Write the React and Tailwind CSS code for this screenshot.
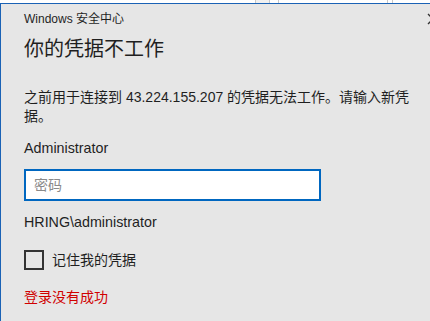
import React from "react";

const font = { fontFamily: '"Liberation Sans", "Noto Sans CJK SC", sans-serif' };

function BackgroundStrip() {
  // sliver of the window behind the dialog
  return (
    <div className="flex h-[3px] bg-white">
      <div className="w-[255px]" />
      <div className="w-[14px] bg-[#f0f0f0] border-l border-[#c8c8c8]" />
      <div className="w-[9px] border-l border-[#c8c8c8]" />
      <div className="w-[109px] border-l border-[#c8c8c8]" />
      <div className="w-[5px] border-l border-[#c8c8c8]" />
      <div className="flex-1 border-l border-[#c8c8c8]" />
    </div>
  );
}

export default function App() {
  return (
    <div
      className="w-[430px] h-[321px] overflow-hidden bg-white text-[#1f1f1f]"
      style={font}
    >
      <BackgroundStrip />
      <div className="relative h-[318px] bg-[#e6e6e6] border-l border-t border-[#1a62b5] pl-[23px] flex flex-col items-start">
        <button className="absolute right-[-9px] top-[9px] text-[#333]">
          <svg width="12" height="12" viewBox="0 0 12 12" className="block">
            <path d="M1 1 L11 11 M11 1 L1 11" stroke="currentColor" strokeWidth="1.3" />
          </svg>
        </button>

        <div className="mt-[7px] h-[16px] text-[12px] leading-[16px]">Windows 安全中心</div>

        <h1 className="mt-[8px] h-[28px] text-[20px] leading-[28px] font-normal">你的凭据不工作</h1>

        <p className="mt-[25px] h-[38px] w-[392px] text-[14px] leading-[19px]">
          之前用于连接到 43.224.155.207 的凭据无法工作。请输入新凭据。
        </p>

        <div className="mt-[13px] h-[19px] text-[14.3px] leading-[19px]">Administrator</div>

        <input
          type="password"
          placeholder="密码"
          className="mt-[11px] block w-[297px] h-[32px] bg-white border-2 border-[#0067c0] px-[8px] text-[14px] placeholder:text-[#8a8a8a] outline-none"
          style={font}
        />

        <div className="mt-[12px] h-[19px] text-[14.3px] leading-[19px]">HRING\administrator</div>

        <label className="mt-[18px] h-[20px] flex items-center gap-[8px]">
          <span className="w-[20px] h-[20px] border-2 border-[#333]" />
          <span className="text-[14px] leading-[19px]">记住我的凭据</span>
        </label>

        <div className="mt-[18px] h-[19px] text-[14px] leading-[19px] text-[#d00000]">登录没有成功</div>
      </div>
    </div>
  );
}
